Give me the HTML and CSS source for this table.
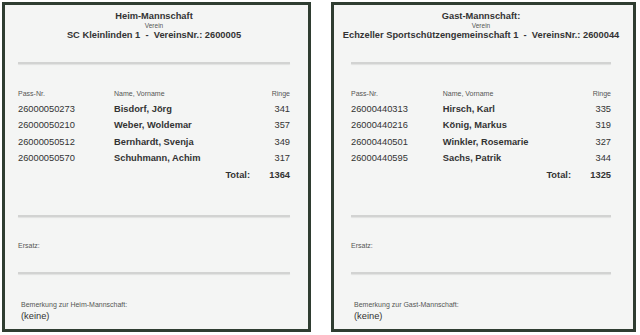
FILE: index.html
```html
<!DOCTYPE html>
<html lang="de">
<head>
<meta charset="utf-8">
<link rel="stylesheet" href="styles.css">
</head>
<body>
<div class="sheet">
  <section class="panel panel--home">
    <div class="title">
      <div class="title__team">Heim-Mannschaft</div>
      <div class="title__label">Verein</div>
      <div class="title__club">SC Kleinlinden 1&nbsp; - &nbsp;VereinsNr.: 2600005</div>
    </div>
    <div class="rule rule--top"></div>
    <div class="grid">
      <div class="head">Pass-Nr.</div><div class="head">Name, Vorname</div><div class="head num">Ringe</div>
      <div class="cell">26000050273</div><div class="cell name">Bisdorf, Jörg</div><div class="cell num">341</div>
      <div class="cell">26000050210</div><div class="cell name">Weber, Woldemar</div><div class="cell num">357</div>
      <div class="cell">26000050512</div><div class="cell name">Bernhardt, Svenja</div><div class="cell num">349</div>
      <div class="cell">26000050570</div><div class="cell name">Schuhmann, Achim</div><div class="cell num">317</div>
    </div>
    <div class="total"><span class="total__label">Total:</span><span class="total__value">1364</span></div>
    <div class="rule rule--mid"></div>
    <div class="label label--ersatz">Ersatz:</div>
    <div class="rule rule--low"></div>
    <div class="note">
      <div class="label">Bemerkung zur Heim-Mannschaft:</div>
      <div class="note__text">(keine)</div>
    </div>
  </section>
  <section class="panel panel--guest">
    <div class="title">
      <div class="title__team">Gast-Mannschaft:</div>
      <div class="title__label">Verein</div>
      <div class="title__club">Echzeller Sportschützengemeinschaft 1&nbsp; - &nbsp;VereinsNr.: 2600044</div>
    </div>
    <div class="rule rule--top"></div>
    <div class="grid">
      <div class="head">Pass-Nr.</div><div class="head">Name, Vorname</div><div class="head num">Ringe</div>
      <div class="cell">26000440313</div><div class="cell name">Hirsch, Karl</div><div class="cell num">335</div>
      <div class="cell">26000440216</div><div class="cell name">König, Markus</div><div class="cell num">319</div>
      <div class="cell">26000440501</div><div class="cell name">Winkler, Rosemarie</div><div class="cell num">327</div>
      <div class="cell">26000440595</div><div class="cell name">Sachs, Patrik</div><div class="cell num">344</div>
    </div>
    <div class="total"><span class="total__label">Total:</span><span class="total__value">1325</span></div>
    <div class="rule rule--mid"></div>
    <div class="label label--ersatz">Ersatz:</div>
    <div class="rule rule--low"></div>
    <div class="note">
      <div class="label">Bemerkung zur Gast-Mannschaft:</div>
      <div class="note__text">(keine)</div>
    </div>
  </section>
</div>
</body>
</html>
```

FILE: styles.css
```css
html, body {
  margin: 0;
  padding: 0;
  background: #ffffff;
}
body {
  font-family: "Liberation Sans", Arial, sans-serif;
  color: #333333;
}
.sheet {
  display: flex;
  gap: 20px;
  padding: 2px 0 0 2px;
}
.panel {
  box-sizing: border-box;
  height: 330px;
  border: 3px solid #2f3d31;
  background: #f4f5f4;
  display: flex;
  flex-direction: column;
}
.panel--home {
  width: 309px;
  padding: 0 18px 0 13px;
}
.panel--guest {
  width: 305px;
  padding: 0 22px 0 17px;
}
.title {
  display: flex;
  flex-direction: column;
  align-items: center;
  padding-top: 5.5px;
  white-space: nowrap;
}
.title__team,
.title__club {
  font-size: 9.3px;
  line-height: 11px;
  font-weight: bold;
}
.title__label {
  font-size: 6.5px;
  line-height: 8px;
  color: #555;
}
.rule {
  height: 2px;
  background: #d2d3d2;
  box-shadow: 0 1px 1px rgba(0, 0, 0, 0.08);
}
.rule--top { margin-top: 21.5px; }
.rule--mid { margin-top: 31px; }
.rule--low { margin-top: 21px; }
.grid {
  display: grid;
  grid-template-columns: 35.3% 1fr auto;
  margin-top: 24.5px;
}
.head {
  font-size: 7px;
  line-height: 10px;
  color: #555;
  margin-bottom: 2.2px;
}
.cell {
  font-size: 9.3px;
  line-height: 16.6px;
  color: #333;
}
.name { font-weight: bold; }
.num { text-align: right; }
.total {
  display: flex;
  justify-content: flex-end;
  font-size: 9.3px;
  line-height: 16.6px;
  font-weight: bold;
}
.total__value {
  width: 40px;
  text-align: right;
}
.label {
  font-size: 7px;
  line-height: 10px;
  color: #555;
}
.label--ersatz { margin-top: 24px; }
.note {
  margin-top: 26.5px;
  padding-left: 3px;
}
.note__text {
  font-size: 9.3px;
  line-height: 11px;
  color: #333;
  margin-top: 0.5px;
}
```
